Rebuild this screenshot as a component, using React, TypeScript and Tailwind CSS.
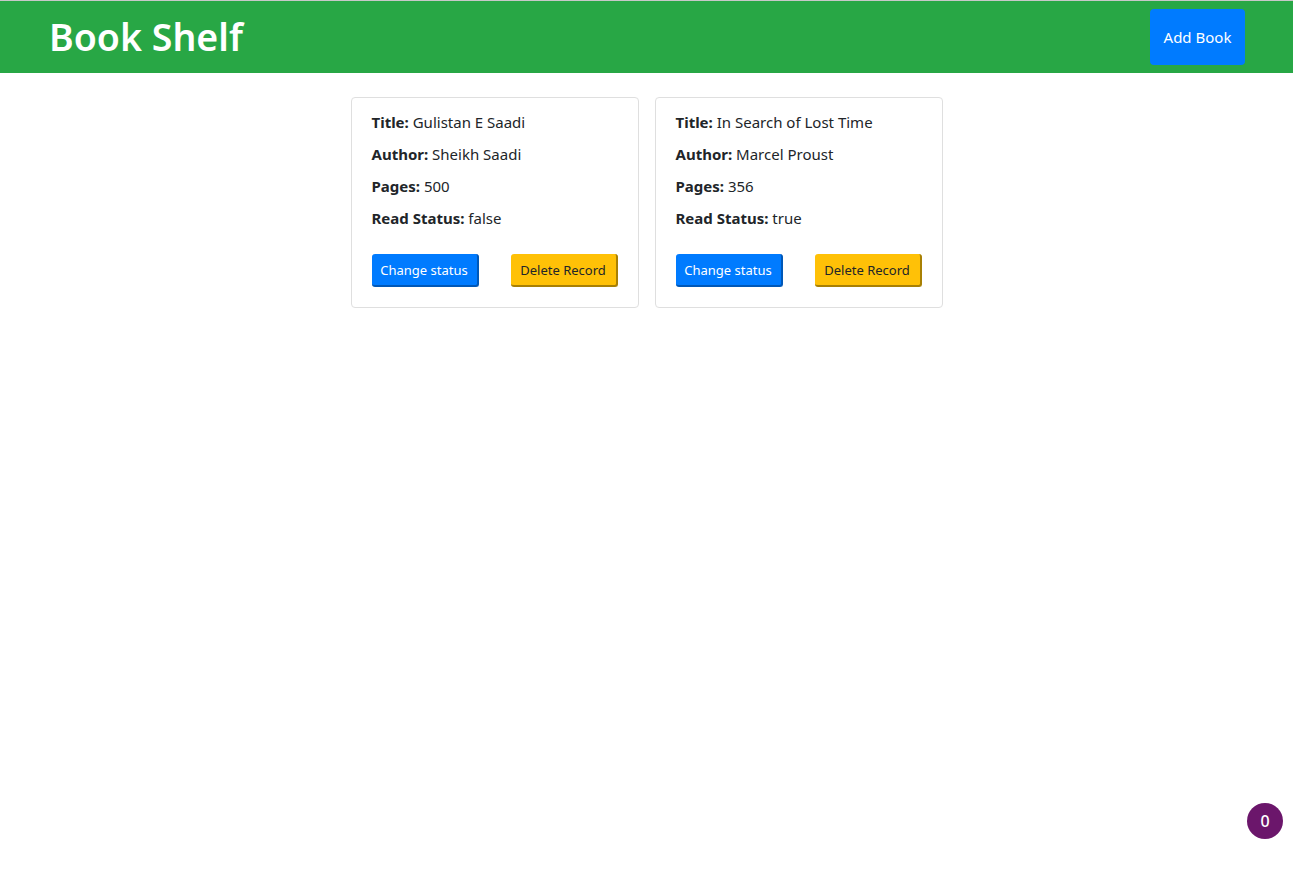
const books = [
  { title: 'Gulistan E Saadi', author: 'Sheikh Saadi', pages: 500, read: false },
  { title: 'In Search of Lost Time', author: 'Marcel Proust', pages: 356, read: true },
]

const BookCard = ({ book }: { book: (typeof books)[number] }) => {
  return (
    <div className="w-[288px] rounded border border-[#dfdfdf] bg-white px-5 pt-3 pb-5 text-[15px] text-[#212529]">
      <p className="mb-2 leading-6"><b>Title:</b> {book.title}</p>
      <p className="mb-2 leading-6"><b>Author:</b> {book.author}</p>
      <p className="mb-2 leading-6"><b>Pages:</b> {book.pages}</p>
      <p className="leading-6"><b>Read Status:</b> {String(book.read)}</p>
      <div className="mt-6 flex justify-between">
        <button className="h-[33px] w-[107px] rounded-[3px] border-r-2 border-b-2 border-[#0058b8] bg-[#007bff] pt-[3px] text-[13px] text-white">
          Change status
        </button>
        <button className="h-[33px] w-[107px] rounded-[3px] border-r-2 border-b-2 border-[#a88004] bg-[#ffc107] pt-[3px] text-[13px] text-[#212529]">
          Delete Record
        </button>
      </div>
    </div>
  )
}

export default function App() {
  return (
    <div className="min-h-[870px] bg-white font-['Noto_Sans','Open_Sans',sans-serif]">
      <header className="flex h-[73px] items-center justify-between border-t border-[#c8c8c8] bg-[#28a745] pr-[48px] pl-[49px]">
        <h1 className="text-[37.5px] leading-none font-semibold text-white">Book Shelf</h1>
        <button className="h-[56px] w-[95px] rounded bg-[#007bff] text-[15px] text-white">Add Book</button>
      </header>
      <main className="mt-6 flex justify-center gap-4">
        {books.map((b) => (
          <BookCard key={b.title} book={b} />
        ))}
      </main>
      <div className="fixed right-[10px] bottom-[31px] flex h-9 w-9 items-center justify-center rounded-full bg-[#6b166b] text-[16px] font-medium text-white">
        0
      </div>
    </div>
  )
}
